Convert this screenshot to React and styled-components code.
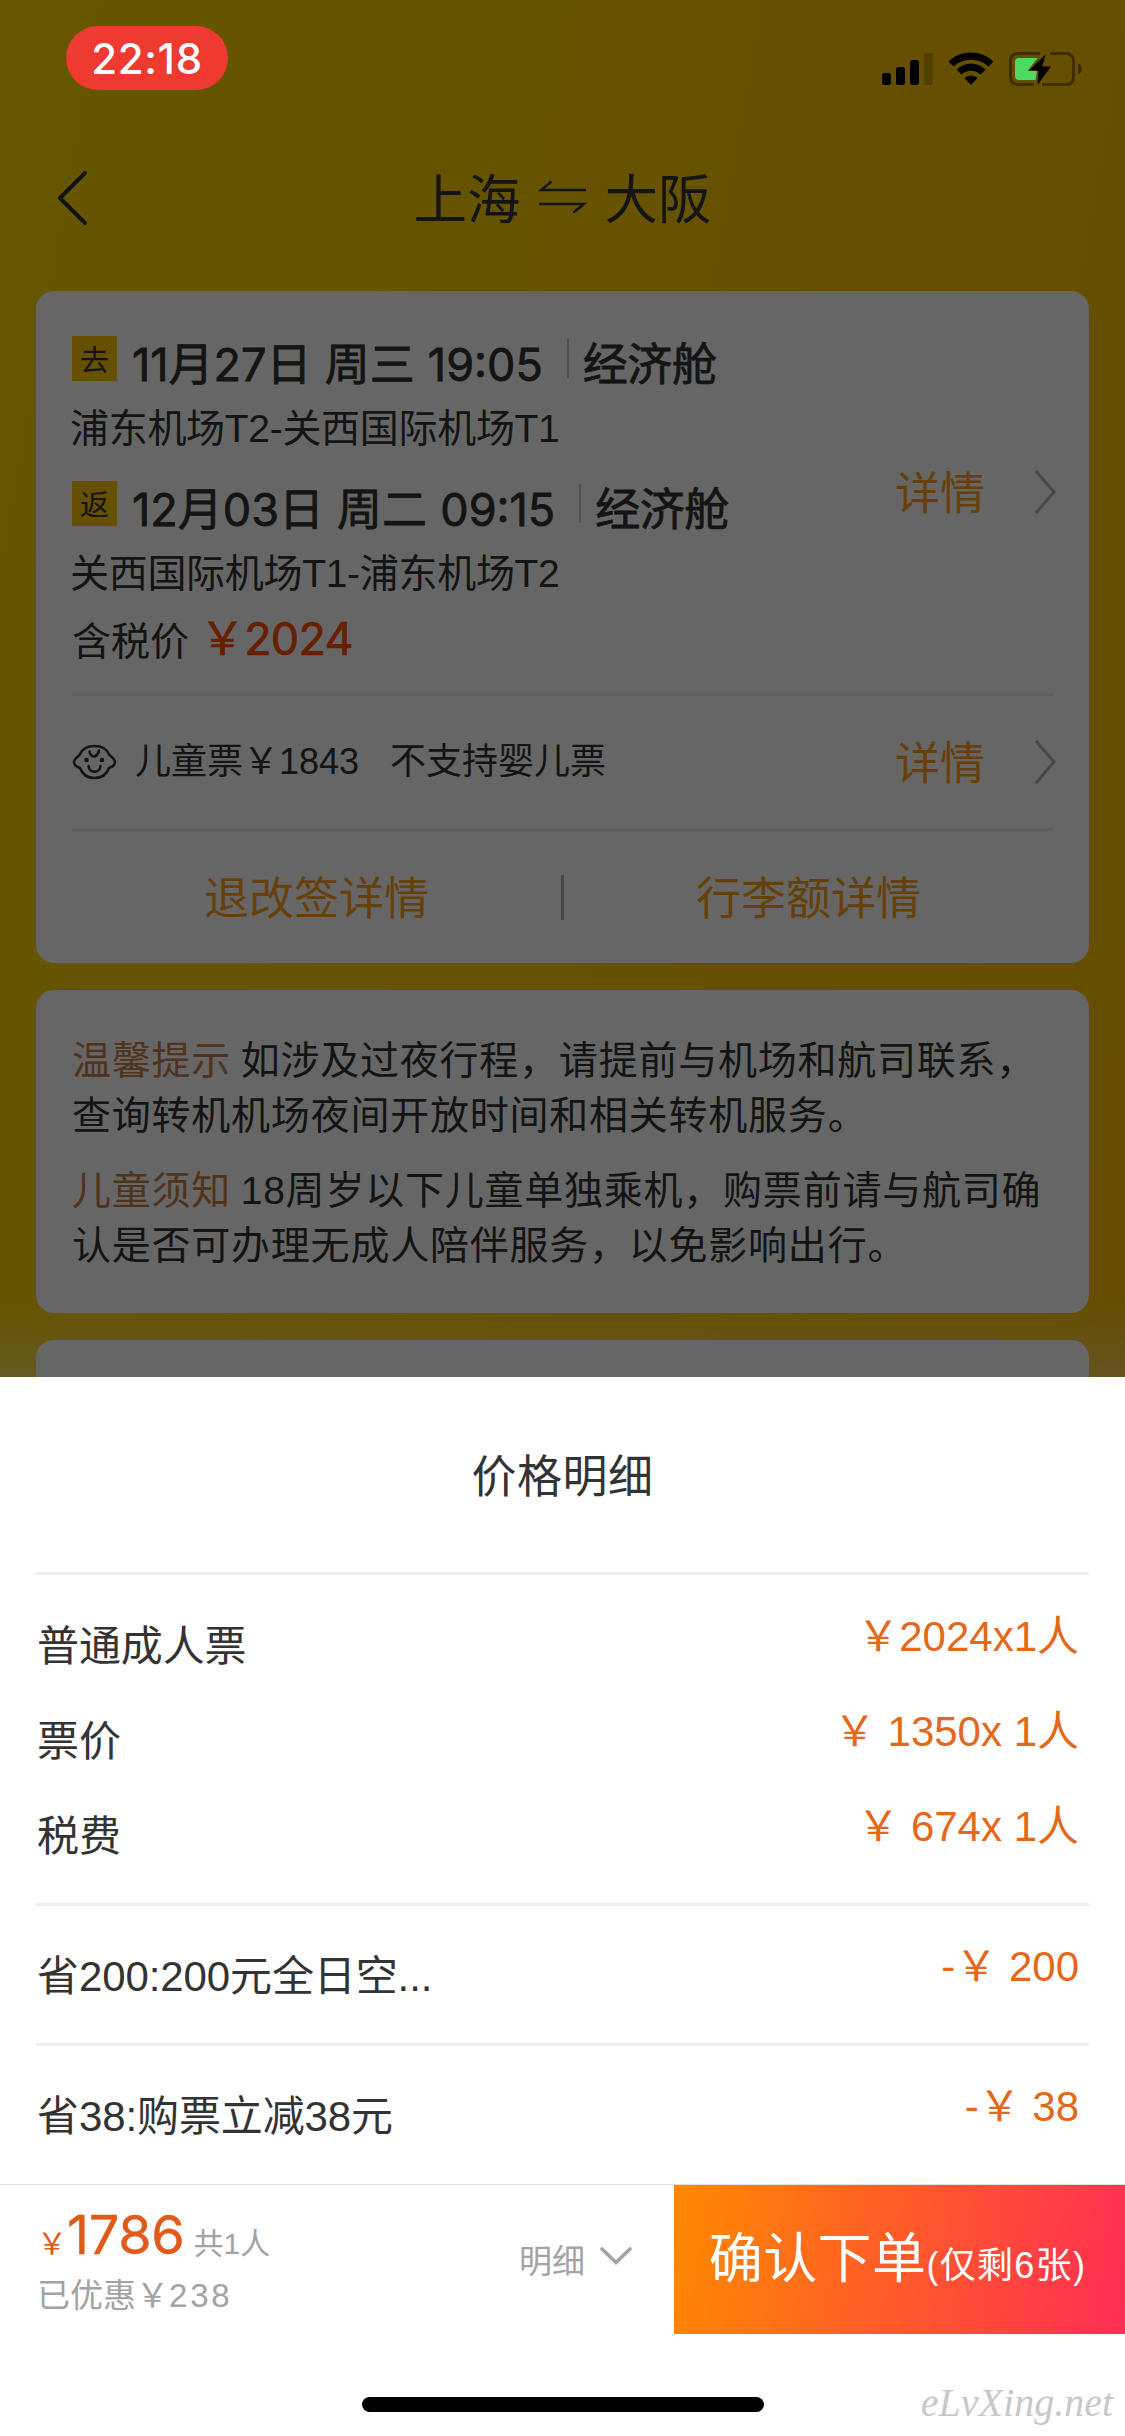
import React from 'react';
import styled, { createGlobalStyle } from 'styled-components';

const GlobalStyle = createGlobalStyle`
  * {
    box-sizing: border-box;
  }

  body {
    margin: 0;
    background: #fff;
    font-family: 'Liberation Sans', 'Noto Sans CJK SC', sans-serif;
    color: #333;
  }
`;

const Screen = styled.div`
  width: 1125px;
  height: 2436px;
  display: flex;
  flex-direction: column;
  overflow: hidden;
  background: #fff;
`;

/* ---------- page behind the sheet ---------- */

const Page = styled.div`
  position: relative;
  height: 1377px;
  flex-shrink: 0;
  overflow: hidden;
  background:
    linear-gradient(to bottom, rgba(244, 244, 244, 0) 1300px, rgba(244, 244, 244, 0.35) 1377px),
    linear-gradient(100deg, #ffd700 0%, #ffcd00 50%, #ffc000 100%);

  &::after {
    content: '';
    position: absolute;
    inset: 0;
    background: rgba(0, 0, 0, 0.6);
  }
`;

const StatusBar = styled.div`
  position: relative;
  z-index: 1;
  height: 132px;
  padding: 26px 42px 0 66px;
  display: flex;
  justify-content: space-between;
  align-items: flex-start;
`;

const TimePill = styled.div`
  width: 162px;
  height: 64px;
  border-radius: 32px;
  background: #ee3a30;
  color: #fff;
  font-family: Inter, sans-serif;
  font-size: 42px;
  font-weight: 500;
  letter-spacing: 0.6px;
  line-height: 65px;
  text-align: center;
`;

const StatusIcons = styled.svg`
  width: 203px;
  height: 36px;
  margin-top: 25px;
`;

const NavBar = styled.div`
  height: 132px;
  padding: 0 56px;
  display: grid;
  grid-template-columns: 1fr auto 1fr;
  align-items: center;
`;

const Route = styled.div`
  display: flex;
  align-items: center;
  gap: 17px;
  padding-top: 5px;
  font-size: 53.5px;
  line-height: 80px;

  svg {
    margin-top: -7px;
  }
`;

const Card = styled.div`
  height: ${props => props.$height}px;
  margin: 27px 36px 0;
  padding: 0 36px;
  border-radius: 18px;
  background: #fff;
`;

const Flights = styled.div`
  height: 402px;
  display: flex;
  justify-content: space-between;
  align-items: center;
`;

const FlightList = styled.div`
  align-self: flex-start;
  padding-top: 45px;
`;

const FlightRow = styled.div`
  height: 56px;
  display: flex;
  align-items: flex-start;
`;

const Badge = styled.span`
  width: 45px;
  height: 45px;
  margin-right: 15px;
  background: #ffc800;
  font-size: 29px;
  line-height: 51px;
  text-align: center;
`;

const Strong = styled.span`
  font-family: Inter, 'Noto Sans CJK SC', sans-serif;
  font-size: 45px;
  line-height: 57px;
  word-spacing: 0.5px;
  white-space: pre;
  -webkit-text-stroke: 0.8px currentColor;
`;

const Cabin = styled(Strong)`
  letter-spacing: -0.4px;
`;

const Bar = styled.span`
  width: 2px;
  height: 39px;
  margin: 3px 14px 0 24px;
  background: #c8c8c8;
`;

const Airports = styled.div`
  height: 72px;
  margin: 0 0 17px -2px;
  font-size: 39px;
  line-height: 74px;
  letter-spacing: -0.3px;
`;

const TaxPrice = styled.div`
  margin-top: -17px;
  display: flex;
  align-items: baseline;
  gap: 11px;
  font-size: 39px;
  line-height: 60px;
`;

const Amount = styled.span`
  color: #ff4e00;
  font-family: Inter, 'Noto Sans CJK SC', sans-serif;
  font-size: 45px;
  letter-spacing: -0.8px;
  -webkit-text-stroke: 0.7px currentColor;
`;

const Rule = styled.div`
  height: 3px;
  background: #eee;
`;

const Link = styled.span`
  padding-top: 5px;
  color: #ffa014;
  font-size: 45px;
  line-height: 66px;
`;

const Details = styled.div`
  display: flex;
  align-items: center;
  gap: 50px;
  margin-right: -4px;
`;

const ChildRow = styled.div`
  height: 132px;
  display: flex;
  align-items: center;
  justify-content: space-between;
`;

const ChildInfo = styled.div`
  display: flex;
  align-items: center;
  font-size: 36px;
  line-height: 60px;

  svg {
    margin-right: 18px;
  }

  span + span {
    margin-left: 31px;
  }
`;

const Actions = styled.div`
  height: 132px;
  display: grid;
  grid-template-columns: 1fr 3px 1fr;
  align-items: center;
  text-align: center;
`;

const ActionsBar = styled.span`
  height: 45px;
  background: #b4b4b4;
`;

const Tip = styled.p`
  margin: 0 0 20px;
  font-size: 39px;
  line-height: 55px;
  letter-spacing: 0.77px;
  white-space: nowrap;

  &:first-child {
    padding-top: 43px;
  }

  b {
    margin-right: -2px;
    color: #c88046;
    font-weight: 400;
  }
`;

/* ---------- price sheet ---------- */

const Sheet = styled.div`
  height: 807px;
  flex-shrink: 0;
  padding: 0 36px;
`;

const SheetTitle = styled.div`
  height: 195px;
  padding-top: 5px;
  font-size: 45px;
  line-height: 192px;
  letter-spacing: 0.5px;
  text-align: center;
`;

const PriceGroup = styled.div`
  height: ${props => props.$height}px;
  padding: ${props => props.$top}px 10px 0 1px;
`;

const PriceRow = styled.div`
  height: 95px;
  display: flex;
  justify-content: space-between;
  font-size: 42px;
  line-height: 60px;
  white-space: pre;
`;

const Label = styled.span`
  margin-top: 10px;
  letter-spacing: -0.1px;
`;

const Price = styled.span`
  color: #e4681a;
`;

/* ---------- footer ---------- */

const Footer = styled.div`
  height: 150px;
  flex-shrink: 0;
  display: flex;
  border-top: 1px solid #e0e0e0;
`;

const Total = styled.div`
  flex: 1;
  padding: 17px 0 0 37px;
  color: #a3a3a3;
`;

const TotalLine = styled.div`
  height: 66px;
  display: flex;
  align-items: baseline;
  font-size: 30px;
  line-height: 66px;
  color: #a3a3a3;
`;

const TotalAmount = styled.span`
  margin-right: 9px;
  color: #e05a1a;

  b {
    font-family: Inter, sans-serif;
    font-size: 54px;
    font-weight: 400;
    letter-spacing: -0.3px;
    -webkit-text-stroke: 0.4px currentColor;
  }
`;

const Saved = styled.div`
  font-size: 33px;
  line-height: 56px;

  span {
    letter-spacing: 2.8px;
  }
`;

const Toggle = styled.div`
  display: flex;
  align-items: center;
  gap: 15px;
  padding: 0 42px 1px 0;
  color: #a3a3a3;
  font-size: 33px;

  svg {
    margin-top: -6px;
  }
`;

const Submit = styled.div`
  width: 451px;
  padding-right: 4px;
  display: flex;
  align-items: baseline;
  justify-content: center;
  background: linear-gradient(100deg, #ff8a00 0%, #ff5a2a 50%, #ff2d55 100%);
  color: #fff;
  font-size: 54px;
  line-height: 148px;
  letter-spacing: 0.4px;

  small {
    font-size: 36px;
    letter-spacing: 1.3px;
  }
`;

const HomeArea = styled.div`
  position: relative;
  flex: 1;
  padding-top: 63px;
  display: flex;
  justify-content: center;
  align-items: flex-start;
`;

const HomeBar = styled.div`
  width: 402px;
  height: 15px;
  border-radius: 8px;
  background: #000;
`;

const Watermark = styled.span`
  position: absolute;
  right: 12px;
  bottom: 9px;
  color: #c8c8c8;
  font-family: 'Liberation Serif', serif;
  font-size: 40px;
  font-style: italic;
  line-height: 48px;
`;

const BackIcon = () => (
  <svg width="32" height="56" viewBox="0 0 32 56" fill="none" stroke="#333" strokeWidth="4">
    <path d="M29 3 L4 28 L29 53" strokeLinecap="round" strokeLinejoin="round" />
  </svg>
);

const SwapIcon = () => (
  <svg width="50" height="34" viewBox="0 0 50 34" fill="none" stroke="#333" strokeWidth="2.4">
    <path d="M48 10 H3 L13.500 1.500" />
    <path d="M1 24 H46 L35.500 32.500" />
  </svg>
);

const ArrowIcon = () => (
  <svg width="22" height="44" viewBox="0 0 22 44" fill="none" stroke="#b4b4b4" strokeWidth="3">
    <path d="M1 1 L19 22 L1 43" />
  </svg>
);

const BabyIcon = () => (
  <svg width="45" height="36" viewBox="0 0 45 36" fill="none" stroke="#333" strokeWidth="2.6" strokeLinecap="round">
    <path d="M7.500 11 C10 5 15.500 2 22.500 2 C29.500 2 35 5 37.500 11 C40 13 43 15.500 43 18 C43 21 40 23 37 24 C34.500 31 29 34 22.500 34 C16 34 10.500 31 8 24 C5 23 2 21 2 18 C2 15.500 5 13 7.500 11 Z" />
    <path d="M17.500 7.500 C18 11 20 12.500 23 12.500 C25 11.500 26.500 9.500 27 6.500" />
    <path d="M16.500 22 C17 29.500 28 29.500 28.500 22" />
    <circle cx="14.500" cy="16" r="1" fill="#333" />
    <circle cx="30" cy="16" r="1" fill="#333" />
  </svg>
);

const DownIcon = () => (
  <svg width="32" height="18" viewBox="0 0 32 18" fill="none" stroke="#a3a3a3" strokeWidth="3.6">
    <path d="M2 2 L16 15.500 L30 2" strokeLinecap="round" />
  </svg>
);

const PhoneStatus = () => (
  <StatusIcons viewBox="0 0 203 36">
    <rect x="2" y="22" width="9" height="12" rx="2.500" />
    <rect x="16" y="16" width="9" height="18" rx="2.500" />
    <rect x="30" y="9" width="9" height="25" rx="2.500" />
    <rect x="44" y="2" width="9" height="32" rx="2.500" opacity="0.2" />
    <path d="M68.500 10.500 C81 -1.500 101 -1.500 113.500 10.500 L108.500 15.500 C99 6.500 83 6.500 73.500 15.500 Z" />
    <path d="M76.500 18.500 C85 10.500 97 10.500 105.500 18.500 L100.500 23.500 C95 18.500 87 18.500 81.500 23.500 Z" />
    <path d="M84.500 27 C88 23.500 94 23.500 97.500 27 L91 34 Z" />
    <path
      d="M160 2.500 H138 Q130.500 2.500 130.500 10.500 V25.500 Q130.500 33.500 138 33.500 H154 M170 2.500 H186 Q193.500 2.500 193.500 10.500 V25.500 Q193.500 33.500 186 33.500 H162"
      fill="none"
      stroke="#000"
      strokeOpacity="0.4"
      strokeWidth="3"
    />
    <path d="M198 12.500 Q202 14 202 18 Q202 22 198 23.500 Z" opacity="0.4" />
    <path d="M139 7 H157.500 L147.500 20 H157 L155.500 29 H139 Q135 29 135 25 V11 Q135 7 139 7 Z" fill="#4cd964" />
    <path d="M166 3 L149 19.500 H158.500 L157.500 34 L171 15.500 H162 Z" />
  </StatusIcons>
);

const flights = [
  { tag: '去', when: '11月27日 周三 19:05', cabin: '经济舱', airports: '浦东机场T2-关西国际机场T1' },
  { tag: '返', when: '12月03日 周二 09:15', cabin: '经济舱', airports: '关西国际机场T1-浦东机场T2' },
];

const fares = [
  { label: '普通成人票', price: '￥2024x1人' },
  { label: '票价', price: '￥ 1350x 1人' },
  { label: '税费', price: '￥ 674x 1人' },
];

const discounts = [
  { label: '省200:200元全日空...', price: '-￥ 200', height: 137 },
  { label: '省38:购票立减38元', price: '-￥ 38', height: 138 },
];

const DetailLink = () => (
  <Details>
    <Link>详情</Link>
    <ArrowIcon />
  </Details>
);

const FlightCard = () => (
  <Card $height={672}>
    <Flights>
      <FlightList>
        {flights.map(flight => (
          <React.Fragment key={flight.tag}>
            <FlightRow>
              <Badge>{flight.tag}</Badge>
              <Strong>{flight.when}</Strong>
              <Bar />
              <Cabin>{flight.cabin}</Cabin>
            </FlightRow>
            <Airports>{flight.airports}</Airports>
          </React.Fragment>
        ))}
        <TaxPrice>
          含税价<Amount>￥2024</Amount>
        </TaxPrice>
      </FlightList>
      <DetailLink />
    </Flights>
    <Rule />
    <ChildRow>
      <ChildInfo>
        <BabyIcon />
        <span>儿童票￥1843</span>
        <span>不支持婴儿票</span>
      </ChildInfo>
      <DetailLink />
    </ChildRow>
    <Rule />
    <Actions>
      <Link>退改签详情</Link>
      <ActionsBar />
      <Link>行李额详情</Link>
    </Actions>
  </Card>
);

const TipsCard = () => (
  <Card $height={323}>
    <Tip>
      <b>温馨提示</b> 如涉及过夜行程，请提前与机场和航司联系，
      <br />
      查询转机机场夜间开放时间和相关转机服务。
    </Tip>
    <Tip>
      <b>儿童须知</b> 18周岁以下儿童单独乘机，购票前请与航司确
      <br />
      认是否可办理无成人陪伴服务，以免影响出行。
    </Tip>
  </Card>
);

const App = () => {
  return (
    <>
      <GlobalStyle />
      <Screen>
        <Page>
          <StatusBar>
            <TimePill>22:18</TimePill>
            <PhoneStatus />
          </StatusBar>
          <NavBar>
            <BackIcon />
            <Route>
              上海
              <SwapIcon />
              大阪
            </Route>
          </NavBar>
          <FlightCard />
          <TipsCard />
          <Card $height={200} />
        </Page>

        <Sheet>
          <SheetTitle>价格明细</SheetTitle>
          <Rule />
          <PriceGroup $height={328} $top={32}>
            {fares.map(row => (
              <PriceRow key={row.label}>
                <Label>{row.label}</Label>
                <Price>{row.price}</Price>
              </PriceRow>
            ))}
          </PriceGroup>
          {discounts.map(row => (
            <React.Fragment key={row.label}>
              <Rule />
              <PriceGroup $height={row.height} $top={31}>
                <PriceRow>
                  <Label>{row.label}</Label>
                  <Price>{row.price}</Price>
                </PriceRow>
              </PriceGroup>
            </React.Fragment>
          ))}
        </Sheet>

        <Footer>
          <Total>
            <TotalLine>
              <TotalAmount>
                ￥<b>1786</b>
              </TotalAmount>
              共1人
            </TotalLine>
            <Saved>
              已优惠￥<span>238</span>
            </Saved>
          </Total>
          <Toggle>
            明细
            <DownIcon />
          </Toggle>
          <Submit>
            确认下单<small>(仅剩6张)</small>
          </Submit>
        </Footer>

        <HomeArea>
          <HomeBar />
          <Watermark>eLvXing.net</Watermark>
        </HomeArea>
      </Screen>
    </>
  );
};

export default App;
